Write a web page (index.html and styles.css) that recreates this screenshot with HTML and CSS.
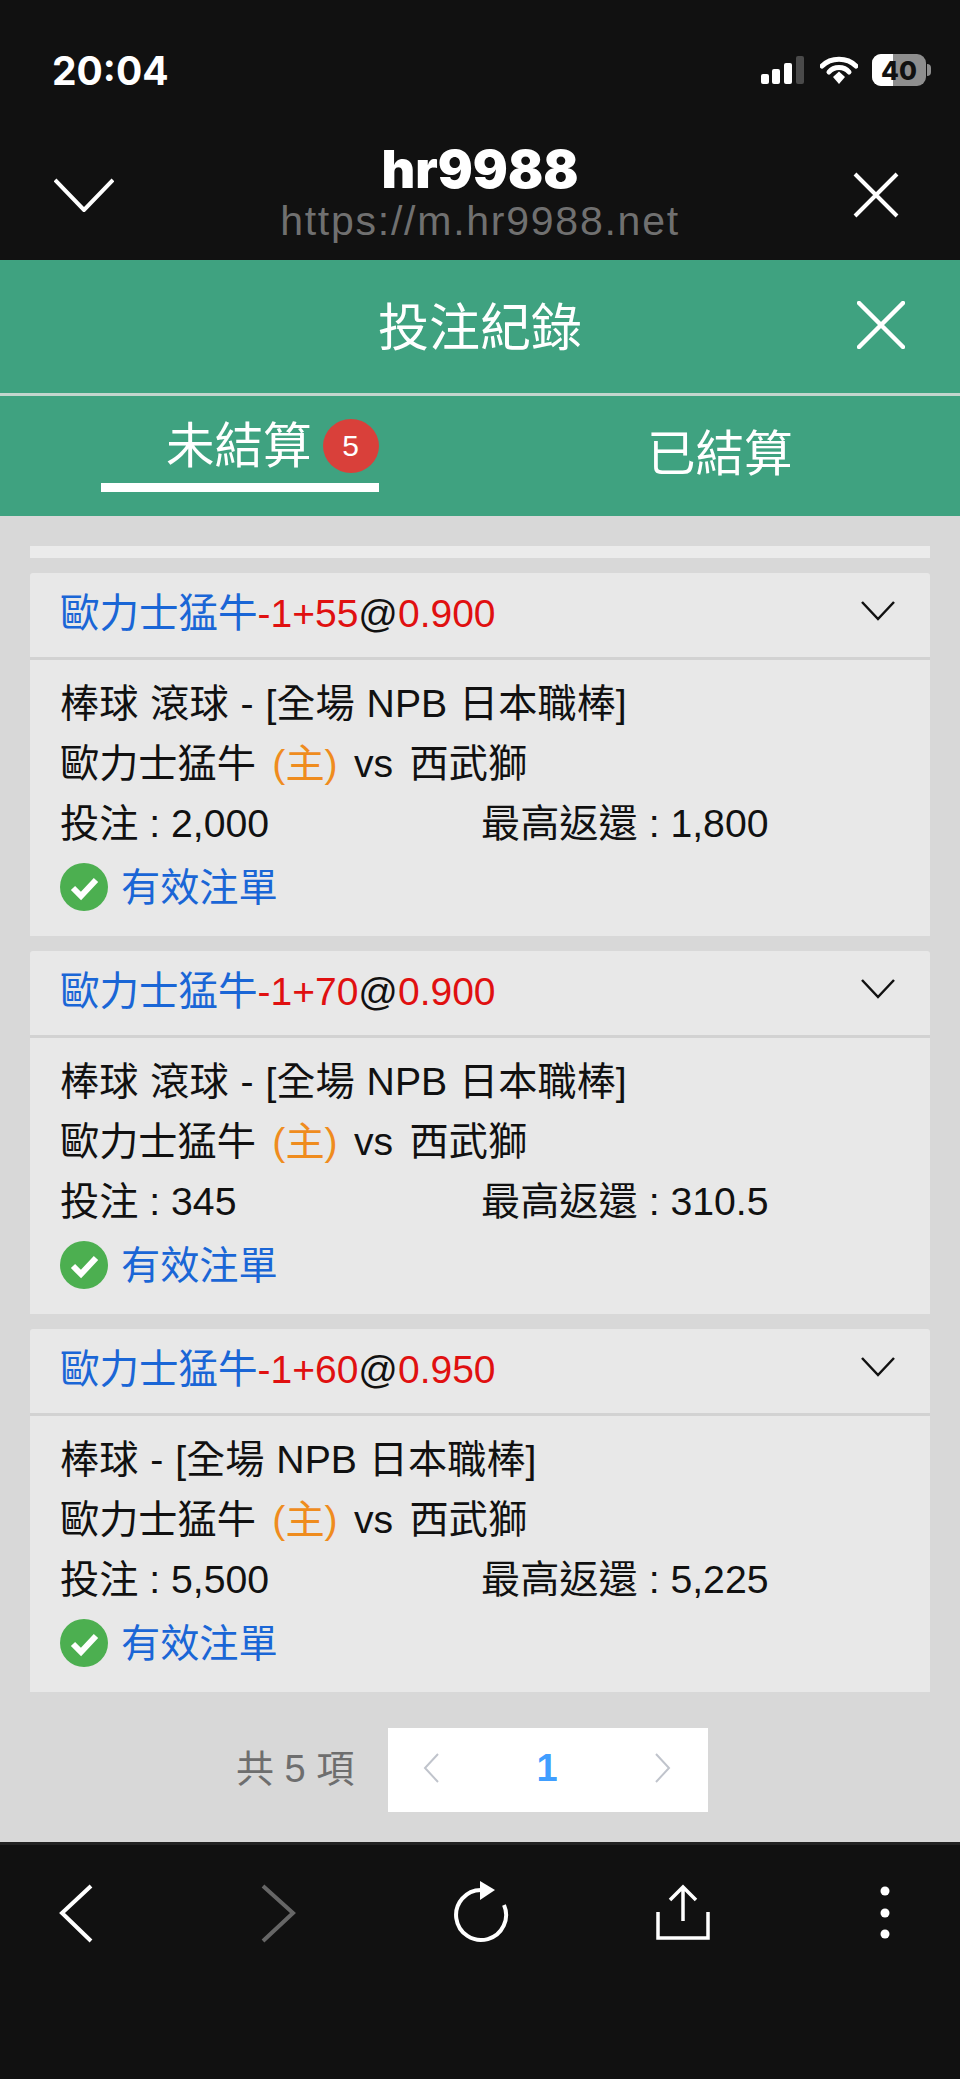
FILE: index.html
```html
<!DOCTYPE html>
<html lang="zh-Hant">
<head>
  <meta charset="UTF-8" />
  <meta name="viewport" content="width=device-width, initial-scale=1.0"/>
  <title>投注紀錄</title>
  <link rel="stylesheet" href="styles.css">
</head>
<body>
  <div class="top">
    <div class="status">
      <span class="time">20:04</span>
      <div class="status-icons">
        <svg class="signal" width="44" height="28" viewBox="0 0 44 28">
          <rect x="0" y="18" width="8" height="10" rx="2" fill="#fff"/>
          <rect x="11" y="13" width="8" height="15" rx="2" fill="#fff"/>
          <rect x="23" y="7" width="8" height="21" rx="2" fill="#fff"/>
          <rect x="35" y="0" width="8" height="28" rx="2" fill="#4a4a4a"/>
        </svg>
        <svg class="wifi" width="38" height="28" viewBox="0 0 38 28">
          <path d="M2 10 C11 1 27 1 36 10" fill="none" stroke="#fff" stroke-width="5" stroke-linecap="round"/>
          <path d="M9 16 C14 10 24 10 29 16" fill="none" stroke="#fff" stroke-width="5" stroke-linecap="round"/>
          <path d="M13 21 L19 15.500 L25 21 L19 28 Z" fill="#fff"/>
        </svg>
        <div class="battery">
          <div class="battery-body"><div class="battery-fill"></div><span class="battery-num">40</span></div>
          <div class="battery-nub"></div>
        </div>
      </div>
    </div>
    <div class="browser">
      <svg class="browser-down" width="60" height="34" viewBox="0 0 60 34">
        <path d="M1 2 L30 32 L59 2" fill="none" stroke="#fff" stroke-width="4"/>
      </svg>
      <div class="browser-title">
        <div class="site">hr9988</div>
        <div class="url">https://m.hr9988.net</div>
      </div>
      <svg class="browser-close" width="46" height="46" viewBox="0 0 46 46">
        <path d="M2 2 L44 44 M44 2 L2 44" fill="none" stroke="#fff" stroke-width="4"/>
      </svg>
    </div>
  </div>

  <div class="panel-title">
    <span>投注紀錄</span>
    <svg class="panel-close" width="48" height="48" viewBox="0 0 48 48">
      <path d="M2 2 L46 46 M46 2 L2 46" fill="none" stroke="#fff" stroke-width="4.500" stroke-linecap="round"/>
    </svg>
  </div>

  <div class="tabs">
    <div class="tab active"><span>未結算</span><span class="badge">5</span></div>
    <div class="tab">已結算</div>
  </div>

  <div class="list">
    <div class="strip"></div>

    <div class="card">
      <div class="card-head">
        <div class="bet"><span class="team">歐力士猛牛</span><span class="red">-1+55</span>@<span class="red">0.900</span></div>
        <svg class="arrow" width="34" height="22" viewBox="0 0 34 22"><path d="M1 2 L17 19 L33 2" fill="none" stroke="#111" stroke-width="2.500"/></svg>
      </div>
      <div class="card-body">
        <div class="line match">棒球 滾球 - [全場 NPB 日本職棒]</div>
        <div class="line teams">歐力士猛牛 <span class="home">(主)</span> vs 西武獅</div>
        <div class="line amounts"><span>投注 : 2,000</span><span>最高返還 : 1,800</span></div>
        <div class="valid">
          <svg width="48" height="48" viewBox="0 0 48 48"><circle cx="24" cy="24" r="24" fill="#4caf50"/><path d="M13 25 L21 33 L36 17" fill="none" stroke="#fff" stroke-width="6"/></svg>
          <span>有效注單</span>
        </div>
      </div>
    </div>

    <div class="card">
      <div class="card-head">
        <div class="bet"><span class="team">歐力士猛牛</span><span class="red">-1+70</span>@<span class="red">0.900</span></div>
        <svg class="arrow" width="34" height="22" viewBox="0 0 34 22"><path d="M1 2 L17 19 L33 2" fill="none" stroke="#111" stroke-width="2.500"/></svg>
      </div>
      <div class="card-body">
        <div class="line match">棒球 滾球 - [全場 NPB 日本職棒]</div>
        <div class="line teams">歐力士猛牛 <span class="home">(主)</span> vs 西武獅</div>
        <div class="line amounts"><span>投注 : 345</span><span>最高返還 : 310.5</span></div>
        <div class="valid">
          <svg width="48" height="48" viewBox="0 0 48 48"><circle cx="24" cy="24" r="24" fill="#4caf50"/><path d="M13 25 L21 33 L36 17" fill="none" stroke="#fff" stroke-width="6"/></svg>
          <span>有效注單</span>
        </div>
      </div>
    </div>

    <div class="card">
      <div class="card-head">
        <div class="bet"><span class="team">歐力士猛牛</span><span class="red">-1+60</span>@<span class="red">0.950</span></div>
        <svg class="arrow" width="34" height="22" viewBox="0 0 34 22"><path d="M1 2 L17 19 L33 2" fill="none" stroke="#111" stroke-width="2.500"/></svg>
      </div>
      <div class="card-body">
        <div class="line match">棒球 - [全場 NPB 日本職棒]</div>
        <div class="line teams">歐力士猛牛 <span class="home">(主)</span> vs 西武獅</div>
        <div class="line amounts"><span>投注 : 5,500</span><span>最高返還 : 5,225</span></div>
        <div class="valid">
          <svg width="48" height="48" viewBox="0 0 48 48"><circle cx="24" cy="24" r="24" fill="#4caf50"/><path d="M13 25 L21 33 L36 17" fill="none" stroke="#fff" stroke-width="6"/></svg>
          <span>有效注單</span>
        </div>
      </div>
    </div>

    <div class="pager">
      <span class="total">共 5 項</span>
      <div class="pages">
        <svg width="16" height="30" viewBox="0 0 16 30"><path d="M15 1 L2 15 L15 29" fill="none" stroke="#c0c4cc" stroke-width="2"/></svg>
        <span class="page">1</span>
        <svg width="16" height="30" viewBox="0 0 16 30"><path d="M1 1 L14 15 L1 29" fill="none" stroke="#c0c4cc" stroke-width="2"/></svg>
      </div>
    </div>
  </div>

  <div class="bottom">
    <svg width="80" height="70" viewBox="0 0 80 70"><path d="M55 11 L26 38 L55 66" fill="none" stroke="#fff" stroke-width="4"/></svg>
    <svg width="80" height="70" viewBox="0 0 80 70"><path d="M25 11 L55 38 L25 66" fill="none" stroke="#666" stroke-width="4"/></svg>
    <svg width="80" height="70" viewBox="0 0 80 70">
      <path d="M40 15 A25 25 0 1 0 63 30" fill="none" stroke="#fff" stroke-width="4"/>
      <path d="M39 6 L54 15 L39 25 Z" fill="#fff"/>
    </svg>
    <svg width="80" height="70" viewBox="0 0 80 70">
      <path d="M15 37 L15 63 L65 63 L65 37 M40 12 L40 46 M27 25 L40 12 L53 25" fill="none" stroke="#fff" stroke-width="3.500"/>
    </svg>
    <svg width="80" height="70" viewBox="0 0 80 70">
      <circle cx="40" cy="16" r="4.500" fill="#fff"/><circle cx="40" cy="38" r="4.500" fill="#fff"/><circle cx="40" cy="59" r="4.500" fill="#fff"/>
    </svg>
  </div>
</body>
</html>
```

FILE: styles.css
```css
* {
  box-sizing: border-box;
}

body {
  font-family: "Liberation Sans", "Noto Sans CJK TC", sans-serif;
  margin: 0;
  width: 960px;
  height: 2079px;
  display: flex;
  flex-direction: column;
  background: #d8d8d8;
  color: #111;
  overflow: hidden;
}

.top {
  background: #111;
  height: 260px;
  padding-top: 50px;
  color: white;
}

.status {
  display: flex;
  justify-content: space-between;
  align-items: center;
  height: 40px;
  padding: 0 29px 0 52px;
}

.time {
  font-family: Inter, "Liberation Sans", sans-serif;
  font-size: 39px;
  font-weight: 700;
}

.status-icons {
  display: flex;
  align-items: center;
}

.wifi {
  margin-left: 15px;
}

.battery {
  display: flex;
  align-items: center;
  margin-left: 14px;
}

.battery-body {
  position: relative;
  width: 54px;
  height: 32px;
  border-radius: 9px;
  background: #8e8e8e;
  overflow: hidden;
  display: flex;
  align-items: center;
  justify-content: center;
}

.battery-fill {
  position: absolute;
  left: 0;
  top: 0;
  bottom: 0;
  width: 21px;
  background: white;
}

.battery-num {
  position: relative;
  color: #111;
  font-family: Inter, "Liberation Sans", sans-serif;
  font-size: 26px;
  font-weight: 800;
}

.battery-nub {
  width: 4px;
  height: 12px;
  margin-left: 1px;
  background: #8e8e8e;
  border-radius: 0 4px 4px 0;
}

.browser {
  display: flex;
  justify-content: space-between;
  align-items: flex-start;
  height: 170px;
  padding: 55px 61px 0 54px;
}

.browser-title {
  text-align: center;
  margin-right: 7px;
}

.site {
  font-family: Inter, "Liberation Sans", sans-serif;
  font-size: 52px;
  font-weight: 900;
  line-height: 50px;
}

.url {
  font-size: 41px;
  line-height: 52px;
  color: #707070;
  letter-spacing: 1.750px;
}

.browser-down {
  margin-top: 33px;
}

.browser-close {
  margin-top: 27px;
}

.panel-title {
  background: #3fa280;
  height: 136px;
  border-bottom: 3px solid #c4d6ce;
  color: white;
  font-size: 51px;
  display: flex;
  justify-content: center;
  align-items: center;
  position: relative;
  padding-bottom: 5px;
}

.panel-close {
  position: absolute;
  right: 55px;
  top: 41px;
}

.tabs {
  background: #3fa280;
  height: 120px;
  display: flex;
  padding-left: 101px;
  color: white;
  font-size: 48.500px;
}

.tab {
  display: flex;
  align-items: center;
  flex: none;
  white-space: nowrap;
  height: 96px;
  line-height: 60px;
}

.tab.active {
  width: 278px;
  padding: 12px 0 0 65px;
  border-bottom: 9px solid white;
}

.tab:last-child {
  margin-left: 268px;
  align-self: flex-start;
  height: 116px;
}

.badge {
  flex: none;
  width: 56px;
  height: 54px;
  margin-left: 11px;
  border-radius: 50%;
  background: #d9403a;
  font-size: 30px;
  line-height: 54px;
  text-align: center;
}

.list {
  flex: 1;
  padding: 30px 30px 0;
}

.strip {
  height: 12px;
  background: #ebebeb;
}

.card {
  margin-top: 15px;
}

.card-head {
  height: 87px;
  padding: 0 35px 3px 30px;
  background: #e8e8e8;
  border-bottom: 3px solid #d2d2d2;
  font-size: 39px;
  display: flex;
  justify-content: space-between;
  align-items: center;
  border-radius: 3px 3px 0 0;
}

.bet {
  margin-top: -8px;
}

.arrow {
  margin-top: -6px;
}

.team {
  color: #1a66d6;
  font-size: 39.500px;
}

.red {
  color: #e01010;
}

.card-body {
  height: 276px;
  padding: 14px 30px 0;
  background: #e8e8e8;
  font-size: 39.200px;
}

.line {
  height: 60px;
  line-height: 60px;
}

.match {
  word-spacing: 1px;
}

.teams {
  word-spacing: 5.500px;
}

.home {
  color: #ef8c1e;
}

.amounts {
  display: flex;
}

.amounts span:first-child {
  width: 421px;
}

.valid {
  display: flex;
  align-items: center;
  gap: 13px;
  margin-top: 7px;
  color: #1a66d6;
}

.valid span {
  margin-top: -5px;
}

.pager {
  display: flex;
  align-items: center;
  margin-top: 36px;
  padding-left: 206px;
}

.total {
  width: 152px;
  font-size: 38px;
  color: #6e6e6e;
  padding-bottom: 10px;
}

.pages {
  width: 320px;
  height: 84px;
  background: white;
  display: flex;
  justify-content: space-between;
  align-items: center;
  padding: 0 37px 4px 35px;
}

.page {
  color: #409eff;
  font-size: 38px;
  font-weight: 700;
}

.bottom {
  background: #111;
  border-top: 3px solid #222;
  height: 237px;
  display: flex;
  justify-content: space-between;
  align-items: flex-start;
  padding: 30px 35px 0 36px;
}
```
